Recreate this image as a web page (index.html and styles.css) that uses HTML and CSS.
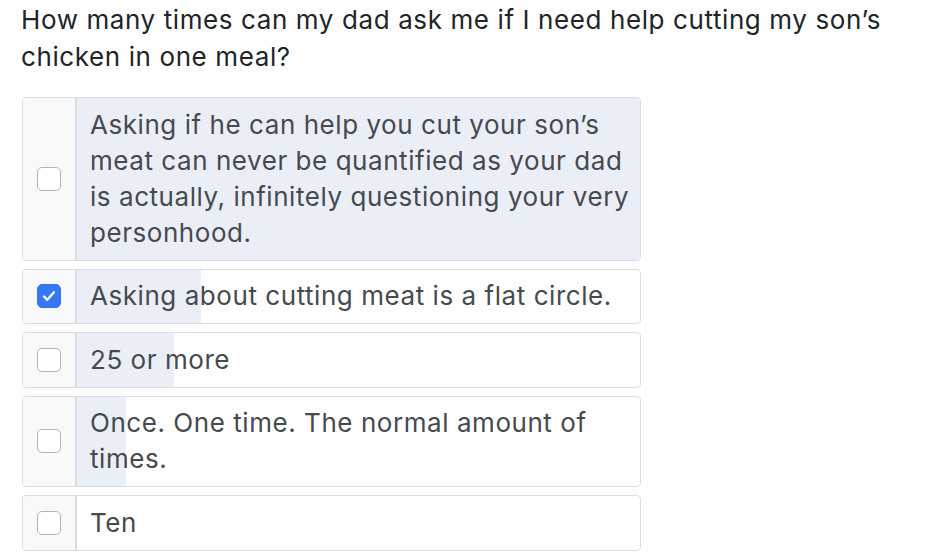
FILE: index.html
```html
<!DOCTYPE html>
<html lang="en">
<head>
<meta charset="utf-8">
<title>Poll</title>
<link rel="stylesheet" href="styles.css">
</head>
<body>
<div class="poll">
  <h1 class="question">How many times can my dad ask me if I need help cutting my son’s chicken in one meal?</h1>
  <ul class="options">
    <li class="option">
      <span class="check-cell"><span class="box"></span></span>
      <span class="answer">
        <span class="bar" style="width:100%"></span>
        <span class="label">Asking if he can help you cut your son’s meat can never be quantified as your dad is actually, infinitely questioning your very personhood.</span>
      </span>
    </li>
    <li class="option">
      <span class="check-cell"><span class="box checked"><svg viewBox="0 0 24 24" width="20" height="20"><path d="M6 12.6l3.9 4L18 7.6" fill="none" stroke="#fff" stroke-width="2.8" stroke-linecap="round" stroke-linejoin="round"/></svg></span></span>
      <span class="answer">
        <span class="bar" style="width:22%"></span>
        <span class="label">Asking about cutting meat is a flat circle.</span>
      </span>
    </li>
    <li class="option">
      <span class="check-cell"><span class="box"></span></span>
      <span class="answer">
        <span class="bar" style="width:17.2%"></span>
        <span class="label">25 or more</span>
      </span>
    </li>
    <li class="option">
      <span class="check-cell"><span class="box"></span></span>
      <span class="answer">
        <span class="bar" style="width:8.7%"></span>
        <span class="label">Once. One time. The normal amount of times.</span>
      </span>
    </li>
    <li class="option">
      <span class="check-cell"><span class="box"></span></span>
      <span class="answer">
        <span class="bar" style="width:0%"></span>
        <span class="label">Ten</span>
      </span>
    </li>
  </ul>
</div>
</body>
</html>
```
FILE: styles.css
```css
* { box-sizing: border-box; }
html, body { margin: 0; padding: 0; background: #fff; }
body {
  font-family: Inter, "Noto Sans", "Liberation Sans", sans-serif;
}
.poll {
  padding: 1px 0 0 21px;
}
.question {
  margin: 0 0 22px 0;
  font-size: 26px;
  font-weight: 400;
  line-height: 37px;
  color: #212529;
  letter-spacing: 0.6px;
  width: 900px;
}
.options {
  list-style: none;
  margin: 0;
  padding: 0 0 0 1px;
  display: flex;
  flex-direction: column;
  gap: 8px;
  width: 620px;
}
.option {
  display: flex;
  border: 1px solid #dcdde0;
  border-radius: 4px;
  overflow: hidden;
}
.check-cell {
  flex: 0 0 54px;
  display: flex;
  align-items: center;
  justify-content: center;
  background: #f8f9fa;
  border-right: 2px solid #dcdde0;
  padding-right: 1px;
}
.box {
  width: 24px;
  height: 24px;
  border: 1px solid #b4b4b6;
  border-radius: 5px;
  background: #fff;
  display: flex;
  align-items: center;
  justify-content: center;
}
.box.checked {
  background: #3478f6;
  border-color: #3478f6;
}
.answer {
  flex: 1;
  position: relative;
  padding: 8.5px 8px 9px 13px;
}
.bar {
  position: absolute;
  left: 0;
  top: 0;
  bottom: 0;
  background: #eaeff7;
}
.label {
  position: relative;
  display: block;
  font-size: 26px;
  line-height: 36px;
  color: #464a4f;
  letter-spacing: 0.55px;
}
```
